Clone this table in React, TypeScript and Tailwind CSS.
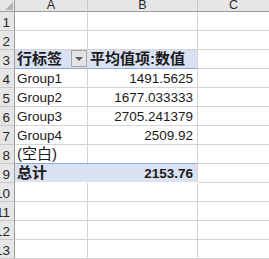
import React from "react";

const F = { fontFamily: '"Liberation Sans", "Noto Sans CJK SC", sans-serif' };

function RowHead({ n, h }: { n: string; h: string }) {
  return (
    <div className={`${h} bg-[#e6e6e6] border-r border-r-[#9c9c9c] border-b border-b-[#c8c8c8] flex items-end justify-end pr-[4px] pb-[1px] overflow-hidden text-[13.5px] leading-none text-[#262626]`}>
      <span className="whitespace-nowrap">{n}</span>
    </div>
  );
}

function Cell({
  children,
  cls = "",
}: {
  children?: React.ReactNode;
  cls?: string;
}) {
  return (
    <div className={`h-[19px] border-r border-b border-[#d4d4d4] flex items-end whitespace-nowrap overflow-visible text-[13.5px] leading-none text-[#1a1a1a] pb-[2px] ${cls}`}>
      {children}
    </div>
  );
}

const rows: { label: React.ReactNode; value: string }[] = [
  { label: "Group1", value: "1491.5625" },
  { label: "Group2", value: "1677.033333" },
  { label: "Group3", value: "2705.241379" },
  { label: "Group4", value: "2509.92" },
  { label: <span className="text-[15px]">(空白)</span>, value: "" },
];

export default function App() {
  return (
    <div className="w-[269px] h-[259px] overflow-hidden bg-white" style={F}>
      <div className="grid grid-cols-[15px_73px_110px_72px]">
        {/* column header */}
        <div className="h-[12px] bg-[#e6e6e6] border-r border-r-[#9c9c9c] border-b border-b-[#9c9c9c] relative overflow-hidden">
          <div className="absolute right-[1px] bottom-[1px] w-0 h-0 border-l-[8px] border-l-transparent border-b-[8px] border-b-[#b4b4b4]" />
        </div>
        {["A", "B", "C"].map((c) => (
          <div key={c} className="h-[12px] bg-[#e6e6e6] border-r border-r-[#c8c8c8] border-b border-b-[#9c9c9c] flex items-center justify-center text-[12.5px] leading-[11px] text-[#262626] overflow-hidden">
            <span>{c}</span>
          </div>
        ))}

        {/* row 1 */}
        <RowHead n="1" h="h-[19px]" />
        <Cell />
        <Cell />
        <Cell />
        {/* row 2 */}
        <RowHead n="2" h="h-[19px]" />
        <Cell />
        <Cell />
        <Cell />
        {/* row 3 header */}
        <RowHead n="3" h="h-[19px]" />
        <div className="h-[19px] bg-[#d9e1f2] border-b border-b-[#8ea9db] flex items-end justify-between pl-[2px] pb-[1px]">
          <span className="text-[15px] leading-none font-bold text-[#1a1a1a] pb-[1px]">行标签</span>
          <div className="w-[16px] h-[17px] mr-[1px] bg-[#e4e4e4] border border-[#a6a6a6] flex items-center justify-center">
            <div className="w-0 h-0 border-l-[4px] border-r-[4px] border-t-[4px] border-l-transparent border-r-transparent border-t-[#5a5a5a]" />
          </div>
        </div>
        <div className="h-[19px] bg-[#d9e1f2] border-r border-r-[#d4d4d4] border-b border-b-[#8ea9db] flex items-end pl-[2px] pb-[2px]">
          <span className="text-[15px] leading-none font-bold text-[#1a1a1a] whitespace-nowrap">平均值项:数值</span>
        </div>
        <Cell />

        {rows.map((r, i) => (
          <React.Fragment key={i}>
            <RowHead n={String(i + 4)} h="h-[19px]" />
            <Cell cls="pl-[2px]">{r.label}</Cell>
            <Cell cls="justify-end pr-[4px]">{r.value}</Cell>
            <Cell />
          </React.Fragment>
        ))}

        {/* total row */}
        <RowHead n="9" h="h-[19px]" />
        <div className="h-[19px] bg-[#d9e1f2] border-t border-t-[#8ea9db] -mt-[1px] flex items-end pl-[2px] pb-[2px]">
          <span className="text-[15px] leading-none font-bold text-[#1a1a1a]">总计</span>
        </div>
        <div className="h-[19px] bg-[#d9e1f2] border-t border-t-[#8ea9db] -mt-[1px] border-r border-r-[#d4d4d4] flex items-end justify-end pr-[4px] pb-[2px]">
          <span className="text-[13.5px] leading-none font-bold text-[#1a1a1a]">2153.76</span>
        </div>
        <Cell />

        {["10", "11", "12", "13"].map((n) => (
          <React.Fragment key={n}>
            <RowHead n={n} h="h-[19px]" />
            <Cell />
            <Cell />
            <Cell />
          </React.Fragment>
        ))}
      </div>
    </div>
  );
}
